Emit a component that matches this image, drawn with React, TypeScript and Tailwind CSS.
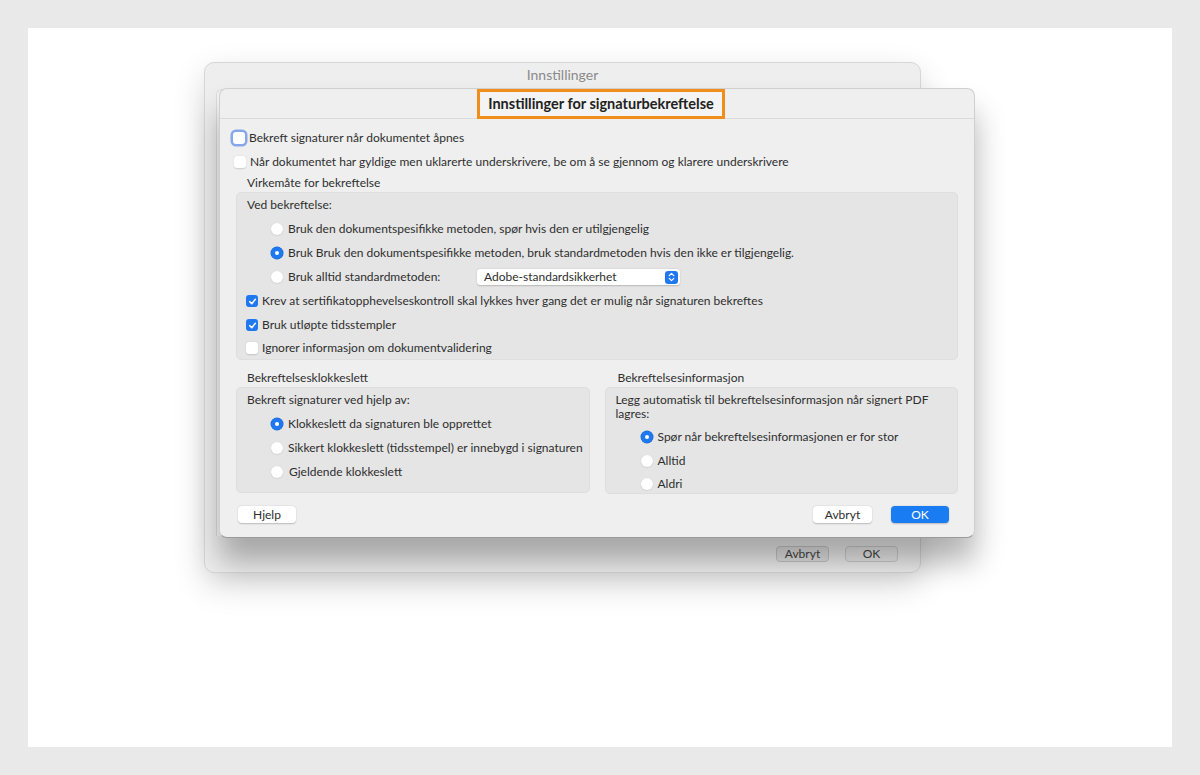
import React from "react";

const font = { fontFamily: "Lato, 'Noto Sans', sans-serif" };

const Radio = ({ on }: { on?: boolean }) =>
  on ? (
    <span className="w-[12px] h-[12px] rounded-full bg-[#1f78f0] flex items-center justify-center shrink-0 shadow-[0_0_0_0.5px_#1a66cc]">
      <span className="w-[4px] h-[4px] rounded-full bg-white" />
    </span>
  ) : (
    <span className="w-[12px] h-[12px] rounded-full bg-white shrink-0 shadow-[0_0.5px_1.5px_rgba(0,0,0,0.15)]" />
  );

const Check = ({ on, focus }: { on?: boolean; focus?: boolean }) => {
  if (on)
    return (
      <span className="w-[12px] h-[12px] rounded-[3px] bg-[#1f78f0] flex items-center justify-center shrink-0">
        <svg width="9" height="9" viewBox="0 0 10 10">
          <path d="M2 5.2 L4.2 7.4 L8.2 2.6" fill="none" stroke="white" strokeWidth="1.7" strokeLinecap="round" strokeLinejoin="round" />
        </svg>
      </span>
    );
  return (
    <span
      className={
        "w-[12px] h-[12px] rounded-[3px] bg-white shrink-0 " +
        (focus
          ? "shadow-[0_0_0_2.5px_#86a8ea]"
          : "shadow-[0_0.5px_1.5px_rgba(0,0,0,0.15)]")
      }
    />
  );
};

const Row = ({ h, pl, children }: { h: string; pl: string; children: React.ReactNode }) => (
  <div className={`flex items-center gap-[5px] ${h} ${pl}`}>{children}</div>
);

export default function App() {
  return (
    <div className="w-[1200px] h-[775px] bg-[#e9e9e9] p-[28px] text-[12px] text-[#2e2e2e]" style={font}>
      <div className="relative w-full h-full bg-white">
        {/* back window */}
        <div className="absolute left-[176px] top-[34px] w-[717px] h-[511px] rounded-[10px] bg-[#eeeeee] border border-[#d6d6d6] shadow-[0_12px_32px_rgba(0,0,0,0.16)] flex flex-col">
          <div className="h-[22px] flex items-center justify-center text-[14px] text-[#8a8a8a]">
            Innstillinger
          </div>
          <div className="mt-[4px] ml-[11px] mr-[12px] flex-1 bg-[#f6f6f6] border-l border-t border-[#dcdcdc] rounded-tl-[6px]" />
          <div className="h-[36px] flex items-center justify-end gap-[16px] pr-[22px]">
            <button className="w-[53px] h-[16px] rounded-[4px] bg-[#e2e2e2] border border-[#c6c6c6] text-[12px] text-[#444] leading-none">
              Avbryt
            </button>
            <button className="w-[53px] h-[16px] rounded-[4px] bg-[#e9e9e9] border border-[#cccccc] text-[12px] text-[#444] leading-none">
              OK
            </button>
          </div>
        </div>

        {/* front dialog */}
        <div className="absolute left-[191px] top-[60px] w-[756px] h-[450px] rounded-[8px] bg-[#efefef] border border-[#cfcfcf] border-b-[#9a9a9a] shadow-[0_24px_30px_rgba(0,0,0,0.3)] flex flex-col">
          <div className="h-[30px] border-b border-[#dadada] flex justify-center shrink-0">
            <div className="ml-[8px] w-[248px] h-[30px] border-[3px] border-[#f08e1c] flex items-center justify-center text-[14.5px] font-bold text-[#222] bg-[#f4f4f4]">
              Innstillinger for signaturbekreftelse
            </div>
          </div>

          <div className="px-[16px] pt-[7px] flex flex-col">
            <Row h="h-[24px]" pl="-ml-[3px]">
              <Check focus />
              <span className="-ml-[1px]">Bekreft signaturer når dokumentet åpnes</span>
            </Row>
            <Row h="h-[24px]" pl="-ml-[2px]">
              <Check />
              <span className="ml-[-1px]">
                Når dokumentet har gyldige men uklarerte underskrivere, be om å se gjennom og klarere underskrivere
              </span>
            </Row>
            <div className="h-[18px] flex items-center pl-[11px]">Virkemåte for bekreftelse</div>

            <div className="h-[168px] rounded-[5px] bg-[#e5e5e5] border border-[#dedede] flex flex-col">
              <Row h="h-[24px]" pl="pl-[10px]">
                <span>Ved bekreftelse:</span>
              </Row>
              <Row h="h-[24px]" pl="pl-[34px]">
                <Radio />
                <span>Bruk den dokumentspesifikke metoden, spør hvis den er utilgjengelig</span>
              </Row>
              <Row h="h-[24px]" pl="pl-[34px]">
                <Radio on />
                <span>Bruk Bruk den dokumentspesifikke metoden, bruk standardmetoden hvis den ikke er tilgjengelig.</span>
              </Row>
              <Row h="h-[25px]" pl="pl-[34px]">
                <Radio />
                <span className="w-[184px]">Bruk alltid standardmetoden:</span>
                <div className="w-[203px] h-[16px] rounded-[3px] bg-white shadow-[0_0.5px_1.5px_rgba(0,0,0,0.2)] flex items-center justify-between pl-[7px] pr-[2px]">
                  <span>Adobe-standardsikkerhet</span>
                  <span className="w-[13px] h-[13px] rounded-[3px] bg-[#1f78f0] flex items-center justify-center">
                    <svg width="7" height="10" viewBox="0 0 7 10">
                      <path d="M1.2 3.6 L3.5 1.4 L5.8 3.6 M1.2 6.4 L3.5 8.6 L5.8 6.4" fill="none" stroke="white" strokeWidth="1.2" strokeLinecap="round" strokeLinejoin="round" />
                    </svg>
                  </span>
                </div>
              </Row>
              <Row h="h-[24px]" pl="pl-[9px]">
                <Check on />
                <span className="-ml-[1px]">Krev at sertifikatopphevelseskontroll skal lykkes hver gang det er mulig når signaturen bekreftes</span>
              </Row>
              <Row h="h-[24px]" pl="pl-[9px]">
                <Check on />
                <span className="-ml-[1px]">Bruk utløpte tidsstempler</span>
              </Row>
              <Row h="h-[22px]" pl="pl-[9px]">
                <Check />
                <span className="-ml-[1px]">Ignorer informasjon om dokumentvalidering</span>
              </Row>
            </div>

            <div className="grid grid-cols-2 gap-[15px] mt-[9px]">
              <div className="flex flex-col">
                <div className="h-[18px] flex items-center pl-[11px]">Bekreftelsesklokkeslett</div>
                <div className="h-[106px] rounded-[5px] bg-[#e5e5e5] border border-[#dedede] flex flex-col">
                  <Row h="h-[24px]" pl="pl-[10px]">
                    <span>Bekreft signaturer ved hjelp av:</span>
                  </Row>
                  <Row h="h-[24px]" pl="pl-[34px]">
                    <Radio on />
                    <span>Klokkeslett da signaturen ble opprettet</span>
                  </Row>
                  <Row h="h-[24px]" pl="pl-[34px]">
                    <Radio />
                    <span>Sikkert klokkeslett (tidsstempel) er innebygd i signaturen</span>
                  </Row>
                  <Row h="h-[23px]" pl="pl-[34px]">
                    <Radio />
                    <span className="ml-[1px]">Gjeldende klokkeslett</span>
                  </Row>
                </div>
              </div>
              <div className="flex flex-col">
                <div className="h-[18px] flex items-center pl-[13px]">Bekreftelsesinformasjon</div>
                <div className="h-[107px] rounded-[5px] bg-[#e5e5e5] border border-[#dedede] flex flex-col overflow-hidden">
                  <div className="pl-[10px] pt-[5px] leading-[14px] h-[37px] shrink-0">
                    Legg automatisk til bekreftelsesinformasjon når signert PDF
                    <br />
                    lagres:
                  </div>
                  <Row h="h-[24px] shrink-0" pl="pl-[35px]">
                    <Radio on />
                    <span>Spør når bekreftelsesinformasjonen er for stor</span>
                  </Row>
                  <Row h="h-[24px] shrink-0" pl="pl-[35px]">
                    <Radio />
                    <span>Alltid</span>
                  </Row>
                  <Row h="h-[22px] shrink-0" pl="pl-[35px]">
                    <Radio />
                    <span>Aldri</span>
                  </Row>
                </div>
              </div>
            </div>

            <div className="flex items-center justify-between mt-[12px] pl-[2px] pr-[9px]">
              <button className="w-[58px] h-[17px] rounded-[4px] bg-white shadow-[0_0.5px_1.5px_rgba(0,0,0,0.22)] leading-none">
                Hjelp
              </button>
              <div className="flex gap-[19px]">
                <button className="w-[59px] h-[17px] rounded-[4px] bg-white shadow-[0_0.5px_1.5px_rgba(0,0,0,0.22)] leading-none">
                  Avbryt
                </button>
                <button className="w-[58px] h-[17px] rounded-[4px] bg-[#1a7cf2] text-white shadow-[0_0.5px_1.5px_rgba(0,0,0,0.22)] leading-none">
                  OK
                </button>
              </div>
            </div>
          </div>
        </div>
      </div>
    </div>
  );
}
